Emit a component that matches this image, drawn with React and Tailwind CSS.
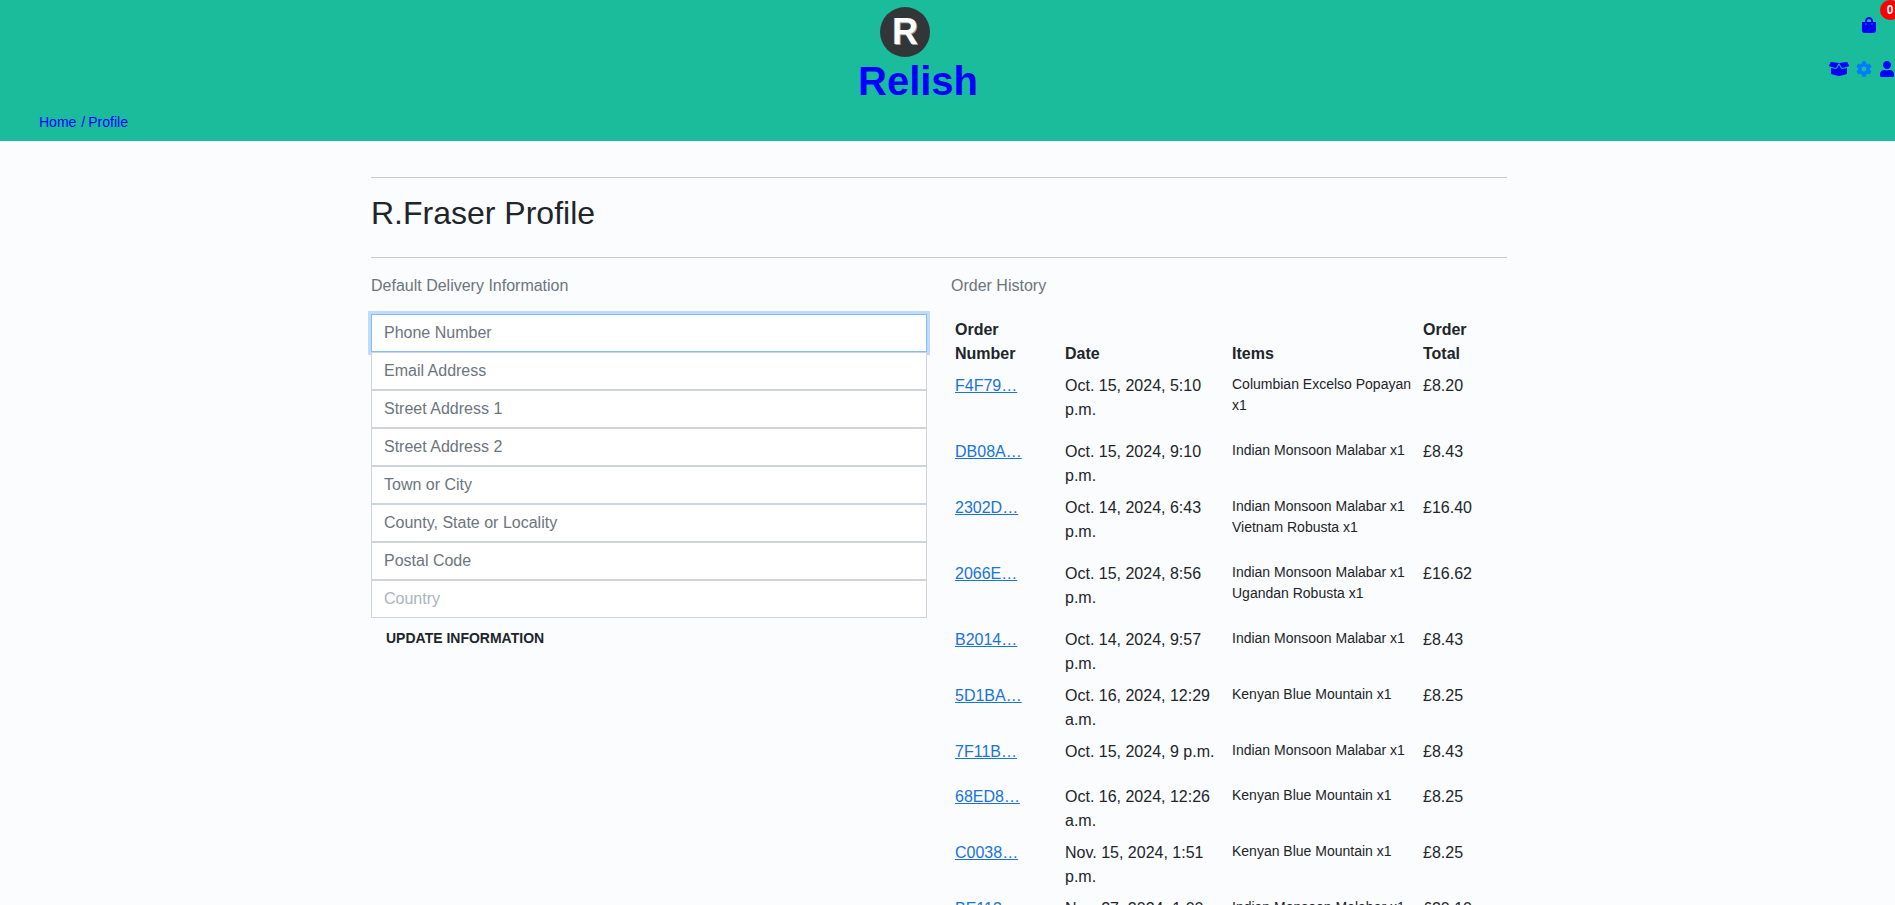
import { FaShoppingBag, FaBoxOpen, FaCog, FaUser } from "react-icons/fa";

const fields = [
  "Phone Number",
  "Email Address",
  "Street Address 1",
  "Street Address 2",
  "Town or City",
  "County, State or Locality",
  "Postal Code",
];

const orders = [
  { no: "F4F79…", date: "Oct. 15, 2024, 5:10 p.m.", items: ["Columbian Excelso Popayan x1"], total: "£8.20" },
  { no: "DB08A…", date: "Oct. 15, 2024, 9:10 p.m.", items: ["Indian Monsoon Malabar x1"], total: "£8.43" },
  { no: "2302D…", date: "Oct. 14, 2024, 6:43 p.m.", items: ["Indian Monsoon Malabar x1", "Vietnam Robusta x1"], total: "£16.40" },
  { no: "2066E…", date: "Oct. 15, 2024, 8:56 p.m.", items: ["Indian Monsoon Malabar x1", "Ugandan Robusta x1"], total: "£16.62" },
  { no: "B2014…", date: "Oct. 14, 2024, 9:57 p.m.", items: ["Indian Monsoon Malabar x1"], total: "£8.43" },
  { no: "5D1BA…", date: "Oct. 16, 2024, 12:29 a.m.", items: ["Kenyan Blue Mountain x1"], total: "£8.25" },
  { no: "7F11B…", date: "Oct. 15, 2024, 9 p.m.", items: ["Indian Monsoon Malabar x1"], total: "£8.43" },
  { no: "68ED8…", date: "Oct. 16, 2024, 12:26 a.m.", items: ["Kenyan Blue Mountain x1"], total: "£8.25" },
  { no: "C0038…", date: "Nov. 15, 2024, 1:51 p.m.", items: ["Kenyan Blue Mountain x1"], total: "£8.25" },
  { no: "BE113…", date: "Nov. 27, 2024, 1:00 p.m.", items: ["Indian Monsoon Malabar x1"], total: "£20.10" },
];

export default function App() {
  return (
    <div className="h-screen overflow-hidden bg-[#fbfcfe] text-[#212529] text-base leading-6 font-['Liberation_Sans',Arial,sans-serif]">
      {/* Header */}
      <header className="relative h-[141px] bg-[#1abc9c] overflow-hidden">
        <div className="flex">
          <div className="ml-[858px] pt-[7px] w-[124px]">
            <div className="ml-[22px] w-[50px] h-[50px] rounded-full bg-[#333638] flex items-center justify-center text-white text-[36px] font-bold leading-none [text-shadow:1px_1px_0_#9a9a9a]">R</div>
            <h1 className="text-[40px] leading-[48px] font-bold text-[#0000ff]">Relish</h1>
          </div>
          <div className="ml-auto flex flex-col items-end text-[#0000ff]">
            <div className="relative mt-[17px] mr-[18px]">
              <FaShoppingBag className="w-4 h-4" />
            </div>
            <div className="mt-[28px] flex items-center gap-[7px] mr-[1px]">
              <FaBoxOpen className="w-5 h-4" />
              <FaCog className="w-4 h-4 text-[#007bff]" />
              <FaUser className="ml-[1px] w-[14px] h-4" />
            </div>
          </div>
        </div>
        <div className="absolute right-[-5px] top-[0px] w-5 h-5 rounded-full bg-[#ff0000] text-white text-xs font-bold flex items-center justify-center">0</div>
        <nav className="absolute left-[39px] top-[112px] flex text-sm leading-[21px] text-[#0000ff]">
          <span>Home</span>
          <span className="pl-[5px] pr-[3px]">/</span>
          <span>Profile</span>
        </nav>
      </header>

      {/* Page */}
      <main className="ml-[371px] w-[1136px] pt-9">
        <hr className="border-t border-[#c8cacc]" />
        <h2 className="mt-[16px] mb-[25px] text-[32px] leading-[38px] font-normal">R.Fraser Profile</h2>
        <hr className="border-t border-[#c8cacc]" />

        <div className="flex mt-[16px] gap-6">
          <section className="w-[556px]">
            <p className="text-[#6c757d] mb-[16px]">Default Delivery Information</p>
            <form>
              {fields.map((f, i) => (
                <input
                  key={f}
                  placeholder={f}
                  className={`block w-full h-[38px] px-3 bg-white border outline-none placeholder:text-[#6c757d] ${i === 0 ? "border-[#80bdff] shadow-[0_0_0_3px_#bfdcff]" : "border-[#ced4da]"}`}
                />
              ))}
              <input placeholder="Country" className="block w-full h-[38px] px-3 bg-white border border-[#ced4da] outline-none placeholder:text-[#aab4be]" />
              <button type="button" className="mt-[1px] ml-[15px] h-[38px] text-sm font-bold uppercase">Update Information</button>
            </form>
          </section>

          <section className="w-[556px]">
            <p className="text-[#6c757d] mb-[16px]">Order History</p>
            <table className="table-fixed w-[549px] border-collapse">
              <colgroup>
                <col className="w-[111px]" />
                <col className="w-[167px]" />
                <col className="w-[191px]" />
                <col className="w-[80px]" />
              </colgroup>
              <thead>
                <tr className="font-bold text-left align-bottom">
                  <th className="px-1 py-1">Order Number</th>
                  <th className="px-[3px] py-1">Date</th>
                  <th className="px-[3px] py-1">Items</th>
                  <th className="px-[3px] py-1 pr-8">Order Total</th>
                </tr>
              </thead>
              <tbody>
                {orders.map((o) => (
                  <tr key={o.no} className="align-top">
                    <td className="px-1 py-1"><a href="#" className="text-[#1a73d8] underline">{o.no}</a></td>
                    <td className="px-[3px] py-1">{o.date}</td>
                    <td className="px-[3px] py-1">
                      <p className="mb-4 text-sm leading-[21px]">
                        {o.items.map((it) => <span key={it} className="block">{it}</span>)}
                      </p>
                    </td>
                    <td className="px-[3px] py-1">{o.total}</td>
                  </tr>
                ))}
              </tbody>
            </table>
          </section>
        </div>
      </main>
    </div>
  );
}
